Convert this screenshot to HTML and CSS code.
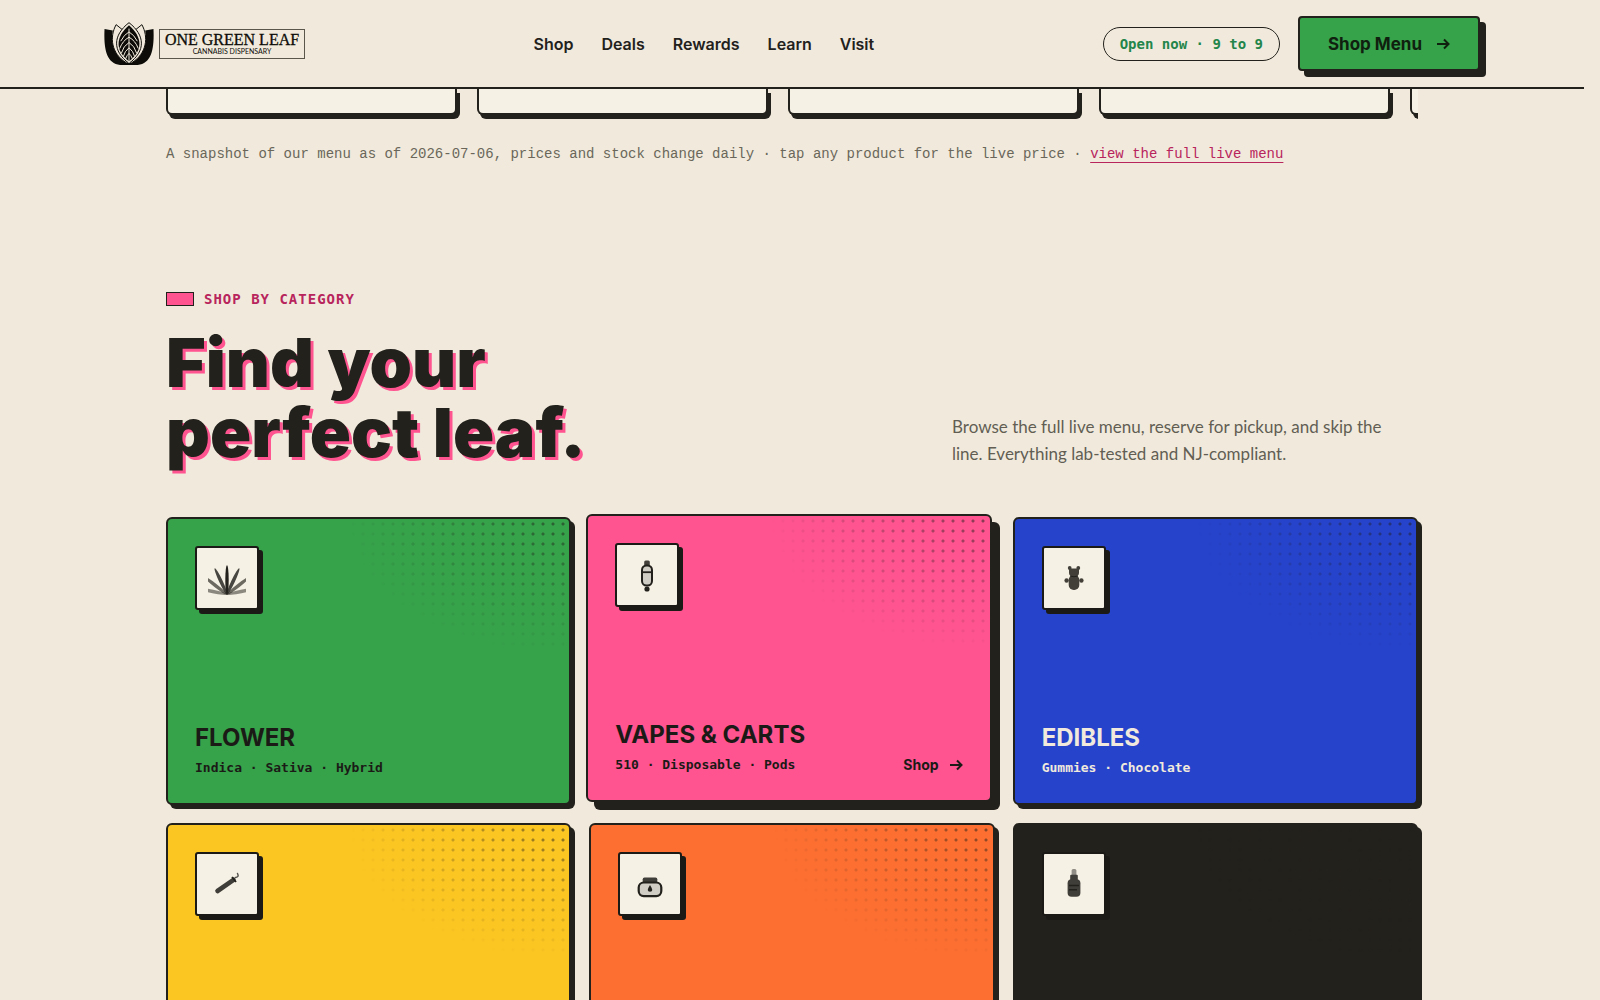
FILE: index.html
```html
<!DOCTYPE html>
<html lang="en">
<head>
<meta charset="utf-8">
<meta name="viewport" content="width=device-width, initial-scale=1">
<title>One Green Leaf Cannabis Dispensary</title>
<link rel="stylesheet" href="styles.css">
</head>
<body>
<header class="site-header">
  <div class="header-inner">
    <a class="logo" href="#">
      <svg class="logo-mark" viewBox="0 0 150 130" aria-hidden="true">
        <path fill="#0d0c08" d="M1 21 L26 26 Q18 78 50 112 L100 112 Q132 78 124 26 L149 21 C152 85 142 130 94 130 L56 130 C8 130 -2 85 1 21Z"/>
        <g fill="#f1eadc" stroke="#0d0c08" stroke-width="3">
          <path d="M36 8 C16 45 20 95 68 124 L76 124 L76 40 Z"/>
          <path d="M114 8 C134 45 130 95 82 124 L74 124 L74 40 Z"/>
          <path d="M75 2 C26 40 24 88 75 125 C126 88 124 40 75 2Z"/>
        </g>
        <path fill="#0d0c08" d="M75 10 C34 46 32 86 75 119 C118 86 116 46 75 10Z"/>
        <g fill="none" stroke="#f1eadc" stroke-width="3">
          <path d="M75 20V124M75 30Q60 38 50 58M75 30Q90 38 100 58M75 46Q56 56 47 80M75 46Q94 56 103 80M75 62Q58 72 52 94M75 62Q92 72 98 94M75 78Q62 88 58 104M75 78Q88 88 92 104M75 95Q68 101 65 111M75 95Q82 101 85 111"/>
        </g>
      </svg>
      <span class="logo-words">
        <span class="logo-name">ONE GREEN LEAF</span>
        <span class="logo-sub">CANNABIS DISPENSARY</span>
      </span>
    </a>
    <nav class="nav" aria-label="Main">
      <a href="#">Shop</a>
      <a href="#">Deals</a>
      <a href="#">Rewards</a>
      <a href="#">Learn</a>
      <a href="#">Visit</a>
    </nav>
    <div class="header-actions">
      <span class="hours">Open now · 9 to 9</span>
      <button class="menu-button" type="button">Shop Menu
        <svg class="arrow" viewBox="0 0 14 14" aria-hidden="true"><path d="M1 7H12.5M8 2.500L12.500 7L8 11.500"/></svg>
      </button>
    </div>
  </div>
</header>

<main class="container">
  <section class="menu-snapshot">
    <div class="rail">
      <div class="product"></div>
      <div class="product"></div>
      <div class="product"></div>
      <div class="product"></div>
      <div class="product"></div>
    </div>
    <p class="note">A snapshot of our menu as of 2026-07-06, prices and stock change daily · tap any product for the live price · <a href="#">view the full live menu</a></p>
  </section>

  <section class="categories">
    <p class="eyebrow">SHOP BY CATEGORY</p>
    <div class="section-head">
      <h2>Find your<br>perfect leaf.</h2>
      <p class="lede">Browse the full live menu, reserve for pickup, and skip the line. Everything lab-tested and NJ-compliant.</p>
    </div>
    <div class="grid">
      <a class="card green" href="#">
        <span class="tile">
          <svg viewBox="0 0 38 38" aria-hidden="true">
            <g fill="#23211c">
              <g opacity=".5">
                <ellipse cx="19" cy="21" rx="1.800" ry="14.500" transform="rotate(-78 19 35.500)"/>
                <ellipse cx="19" cy="21" rx="1.800" ry="14.500" transform="rotate(78 19 35.500)"/>
              </g>
              <g opacity=".65">
                <ellipse cx="19" cy="21" rx="1.800" ry="14.500" transform="rotate(-52 19 35.500)"/>
                <ellipse cx="19" cy="21" rx="1.800" ry="14.500" transform="rotate(52 19 35.500)"/>
              </g>
              <g opacity=".82">
                <ellipse cx="19" cy="21" rx="1.800" ry="14.500" transform="rotate(-25 19 35.500)"/>
                <ellipse cx="19" cy="21" rx="1.800" ry="14.500" transform="rotate(25 19 35.500)"/>
              </g>
              <ellipse cx="19" cy="21" rx="1.700" ry="14.800"/>
            </g>
          </svg>
        </span>
        <span class="card-foot"><span class="card-text"><span class="card-title">FLOWER</span><span class="card-sub">Indica · Sativa · Hybrid</span></span></span>
      </a>
      <a class="card pink active" href="#">
        <span class="tile">
          <svg viewBox="0 0 38 38" aria-hidden="true">
            <rect x="16.200" y="4.500" width="5.600" height="6" rx="1.500" fill="#23211c" opacity=".85"/>
            <rect x="14" y="9.500" width="10" height="20" rx="4.500" fill="#d0cdc4" stroke="#23211c" stroke-width="2"/>
            <path d="M14 16.200H24" stroke="#23211c" stroke-width="1.800"/>
            <circle cx="19" cy="33" r="2.600" fill="#23211c"/>
          </svg>
        </span>
        <span class="card-foot"><span class="card-text"><span class="card-title">VAPES &amp; CARTS</span><span class="card-sub">510 · Disposable · Pods</span></span>
          <span class="card-cta">Shop <svg class="arrow" viewBox="0 0 14 14" aria-hidden="true"><path d="M1 7H12.500M8 2.500L12.500 7L8 11.500"/></svg></span></span>
      </a>
      <a class="card blue" href="#">
        <span class="tile">
          <svg viewBox="0 0 38 38" aria-hidden="true">
            <g fill="#23211c" opacity=".85">
              <circle cx="14.700" cy="9" r="1.900"/><circle cx="23.300" cy="9" r="1.900"/>
              <path d="M14 9.500H24V14Q24 17.500 19 17.500Q14 17.500 14 14Z"/>
              <rect x="13.700" y="16" width="10.600" height="15" rx="5"/>
              <circle cx="11.600" cy="21.500" r="2.200"/><circle cx="26.400" cy="21.500" r="2.200"/>
            </g>
            <path d="M15 17Q19 18.500 23 17" stroke="#23211c" fill="none"/>
          </svg>
        </span>
        <span class="card-foot"><span class="card-text"><span class="card-title">EDIBLES</span><span class="card-sub">Gummies · Chocolate</span></span></span>
      </a>
      <a class="card yellow" href="#">
        <span class="tile">
          <svg viewBox="0 0 38 38" aria-hidden="true">
            <path d="M9.500 26L25.500 14.800" stroke="#403e39" stroke-width="4.600" stroke-linecap="round"/>
            <path d="M24 12L28 17" stroke="#23211c" stroke-width="1.800"/>
            <path d="M27.500 12.500Q31.500 12 29.500 8.500" stroke="#55534d" stroke-width="1.500" fill="none" stroke-linecap="round"/>
          </svg>
        </span>
        <span class="card-foot"><span class="card-text"><span class="card-title">PRE-ROLLS</span><span class="card-sub">Singles · Packs</span></span></span>
      </a>
      <a class="card orange" href="#">
        <span class="tile">
          <svg viewBox="0 0 38 38" aria-hidden="true">
            <rect x="11.700" y="12.500" width="14.600" height="6" rx="1.800" fill="#403e39"/>
            <rect x="7.700" y="17.500" width="22.600" height="13.600" rx="5" fill="#d0cdc4" stroke="#23211c" stroke-width="2.200"/>
            <path d="M19 20Q23.500 26.800 19 26.800Q14.500 26.800 19 20Z" fill="#23211c"/>
          </svg>
        </span>
        <span class="card-foot"><span class="card-text"><span class="card-title">CONCENTRATES</span><span class="card-sub">Rosin · Resin</span></span></span>
      </a>
      <a class="card dark" href="#">
        <span class="tile">
          <svg viewBox="0 0 38 38" aria-hidden="true">
            <rect x="16.600" y="4" width="4.800" height="7" rx="1.500" fill="#8f8d86"/>
            <rect x="15.200" y="9.800" width="7.600" height="6" rx="1" fill="#403e39"/>
            <rect x="12.600" y="14.200" width="12.800" height="17.500" rx="4" fill="#403e39"/>
            <path d="M14 20.500H24M14 24.700H22" stroke="#23211c" stroke-width="1.600"/>
          </svg>
        </span>
        <span class="card-foot"><span class="card-text"><span class="card-title">TINCTURES</span><span class="card-sub">Drops · Topicals</span></span></span>
      </a>
    </div>
  </section>
</main>
</body>
</html>
```
FILE: styles.css
```css
:root {
  --paper: #f1eadc;
  --cream: #f6f1e5;
  --ink: #23211c;
  --pink: #ff5490;
  --rose: #b8245c;
  --green: #36a24a;
  --display: Inter, "Liberation Sans", sans-serif;
  --mono: "DejaVu Sans Mono", monospace;
}

* { box-sizing: border-box; }

body {
  margin: 0;
  padding-right: 16px;
  background: var(--paper);
  color: var(--ink);
  font-family: Lato, sans-serif;
}

a { color: inherit; text-decoration: none; }
p, h2 { margin: 0; }

.site-header {
  position: sticky;
  top: 0;
  z-index: 10;
  background: var(--paper);
  border-bottom: 2px solid var(--ink);
}

.header-inner {
  max-width: 1376px;
  margin: 0 auto;
  padding: 16px 0;
  display: flex;
  align-items: center;
  justify-content: space-between;
}

.logo { display: flex; align-items: center; gap: 5px; color: #0d0c08; }
.logo-mark { width: 50px; height: 43px; }
.logo-words {
  display: flex;
  flex-direction: column;
  align-items: center;
  width: 146px;
  padding: 2px 0 3px;
  border: 1px solid #5a564c;
}
.logo-name { font: 16px/15px "Liberation Serif", serif; white-space: nowrap; -webkit-text-stroke: 0.3px; }
.logo-sub { font: 7px/8px Lato, sans-serif; white-space: nowrap; }

.nav { display: flex; gap: 28px; font: 600 16px/20px var(--display); }

.header-actions { display: flex; align-items: center; gap: 18px; }
.hours {
  padding: 7px 16px;
  border: 1px solid var(--ink);
  border-radius: 17px;
  color: #23854a;
  font: 700 14px/18px var(--mono);
}
.menu-button {
  display: flex;
  align-items: center;
  justify-content: center;
  gap: 14px;
  height: 55px;
  padding: 0 28px;
  border: 2px solid var(--ink);
  border-radius: 4px;
  background: var(--green);
  box-shadow: 6px 6px 0 var(--ink);
  color: #10200f;
  font: 700 17px/20px var(--display);
}
.arrow { width: 14px; height: 14px; fill: none; stroke: currentColor; stroke-width: 2; }

.container { max-width: 1252px; margin: 0 auto; }

.rail { display: flex; gap: 20px; overflow: hidden; padding-bottom: 4px; }
.product {
  flex: 0 0 291px;
  height: 26px;
  border: 2px solid var(--ink);
  border-top: 0;
  border-radius: 0 0 6px 6px;
  background: var(--cream);
  box-shadow: 3px 4px 0 var(--ink);
}
.note { margin-top: 25px; color: #6a675a; font: 14px/20px "Liberation Mono", monospace; }
.note a { color: var(--rose); text-decoration: underline; text-underline-offset: 4px; }

.categories { padding: 125px 0 96px; }
.eyebrow {
  display: flex;
  align-items: center;
  gap: 10px;
  color: var(--rose);
  font: 700 14px/20px var(--mono);
  letter-spacing: 1px;
}
.eyebrow::before {
  content: "";
  width: 26px;
  height: 12px;
  border: 1px solid var(--ink);
  background: var(--pink);
}
.section-head {
  display: flex;
  align-items: flex-end;
  justify-content: space-between;
  margin: 18px 0 50px;
}
h2 {
  font: 900 68px/70px var(--display);
  text-shadow: 3px 3px 0 var(--pink);
}
.lede { width: 466px; padding-right: 16px; color: #625e54; font-size: 17px; line-height: 27px; }

.grid { display: grid; grid-template-columns: repeat(3, 1fr); gap: 18px; }
.card {
  position: relative;
  display: flex;
  flex-direction: column;
  justify-content: space-between;
  height: 288px;
  padding: 27px 27px 25px;
  border: 2px solid var(--ink);
  border-radius: 6px;
  box-shadow: 4px 4px 0 var(--ink);
  color: #1b1a16;
}
.card::before {
  content: "";
  position: absolute;
  inset: 0;
  background: radial-gradient(circle, rgba(35, 33, 28, 0.55) 1px, transparent 2px) 0 0 / 10px 10px;
  mask-image: radial-gradient(220px 134px at 100% 0, #000, transparent);
}
.card.active { transform: translate(-3px, -3px); box-shadow: 8px 8px 0 var(--ink); }
.green { background: var(--green); }
.pink { background: var(--pink); }
.blue { background: #2643cc; color: #f1eadc; }
.yellow { background: #fcc622; }
.orange { background: #fd6f31; }
.dark { background: var(--ink); color: #f1eadc; }

.tile {
  display: grid;
  place-items: center;
  width: 64px;
  height: 64px;
  border: 2px solid #1b1a16;
  border-radius: 3px;
  background: var(--cream);
  box-shadow: 4px 4px 0 #1b1a16;
}
.tile svg { width: 38px; height: 38px; }

.card-foot { display: flex; align-items: flex-end; justify-content: space-between; }
.card-text { display: flex; flex-direction: column; gap: 8px; }
.card-title { font: 700 24px/24px var(--display); }
.card-sub { font: 700 13px/20px var(--mono); }
.card-cta { display: flex; align-items: center; gap: 10px; font: 700 14px/20px var(--display); }
```
